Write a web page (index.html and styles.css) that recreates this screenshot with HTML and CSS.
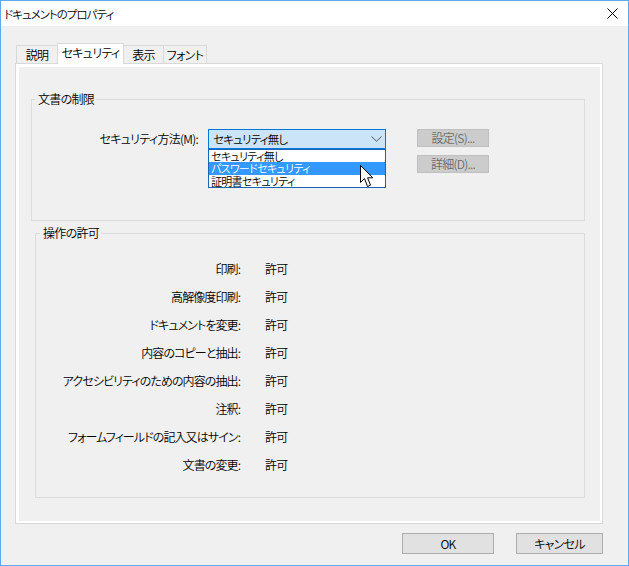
FILE: index.html
```html
<!DOCTYPE html>
<html lang="ja">
<head>
<meta charset="utf-8">
<title>ドキュメントのプロパティ</title>
<link rel="stylesheet" href="styles.css">
</head>
<body>
<div class="window">
  <div class="titlebar">
    <span class="title">ドキュメントのプロパティ</span>
    <svg class="close" width="11" height="11" viewBox="0 0 11 11"><path d="M0.5 0.5 L10.5 10.5 M10.5 0.5 L0.5 10.5" stroke="#000" stroke-width="1" fill="none"/></svg>
  </div>
  <div class="content">
    <div class="tabs">
      <div class="tab t1">説明</div>
      <div class="tab selected t2">セキュリティ</div>
      <div class="tab t3">表示</div>
      <div class="tab t4">フォント</div>
    </div>
    <div class="panel">
      <div class="page">
        <div class="group g1">
          <div class="group-title">文書の制限</div>
          <div class="method-row">
            <div class="method-label">セキュリティ方法(M):</div>
            <div class="combo-wrap">
              <div class="combo">
                <span class="combo-text">セキュリティ無し</span>
                <svg class="chevron" width="11" height="6" viewBox="0 0 11 6"><path d="M0.5 0.5 L5.5 5.2 L10.5 0.5" stroke="#555" stroke-width="1" fill="none"/></svg>
              </div>
              <ul class="dropdown">
                <li class="item">セキュリティ無し</li>
                <li class="item hl">パスワードセキュリティ</li>
                <li class="item">証明書セキュリティ</li>
              </ul>
              <svg class="cursor" width="14" height="23" viewBox="0 0 14 23"><path d="M0.5 0.5 V17.5 L4.5 13.5 L7.5 21.5 L10.5 20.2 L7.6 12.8 H12.8 Z" fill="#fff" stroke="#000" stroke-width="1" stroke-linejoin="miter"/></svg>
            </div>
            <div class="side-buttons">
              <div class="btn disabled">設定(S)...</div>
              <div class="btn disabled">詳細(D)...</div>
            </div>
          </div>
        </div>
        <div class="group g2">
          <div class="group-title">操作の許可</div>
          <div class="perms">
            <div class="perm-label">印刷:</div><div class="perm-value">許可</div>
            <div class="perm-label">高解像度印刷:</div><div class="perm-value">許可</div>
            <div class="perm-label">ドキュメントを変更:</div><div class="perm-value">許可</div>
            <div class="perm-label">内容のコピーと抽出:</div><div class="perm-value">許可</div>
            <div class="perm-label">アクセシビリティのための内容の抽出:</div><div class="perm-value">許可</div>
            <div class="perm-label">注釈:</div><div class="perm-value">許可</div>
            <div class="perm-label">フォームフィールドの記入又はサイン:</div><div class="perm-value">許可</div>
            <div class="perm-label">文書の変更:</div><div class="perm-value">許可</div>
          </div>
        </div>
      </div>
    </div>
    <div class="footer">
      <div class="btn dlg ok">OK</div>
      <div class="btn dlg cancel">キャンセル</div>
    </div>
  </div>
</div>
</body>
</html>
```
FILE: styles.css
```css
* { box-sizing: border-box; }
html, body { margin: 0; padding: 0; }
body {
  font-family: "Noto Sans CJK JP", "Noto Sans", sans-serif;
  font-size: 12px;
  font-weight: 350;
  font-feature-settings: "palt";
  letter-spacing: -0.7px;
  color: #000;
  background: #f0f0f0;
}
.window {
  width: 629px;
  height: 566px;
  border: 1px solid #5fa8ef;
  background: #f0f0f0;
  display: flex;
  flex-direction: column;
}
.titlebar {
  height: 25px;
  background: #fff;
  display: flex;
  align-items: center;
  padding-left: 3px;
}
.title {
  line-height: 16px;
  font-size: 11.5px;
  letter-spacing: -1px;
}
.close { margin-left: auto; margin-right: 10px; }

.content {
  padding: 0 25px 0 14px;
}
.tabs {
  display: flex;
  align-items: flex-end;
  height: 20px;
  margin-top: 17px;
  padding-left: 1px;
}
.tab {
  height: 18px;
  border: 1px solid #d9d9d9;
  border-bottom: none;
  background: #f0f0f0;
  display: flex;
  align-items: center;
  justify-content: center;
  line-height: 14px;
  margin-left: -1px;
}
.t1 { width: 42px; margin-left: 0; }
.t2 { width: 67px; }
.t3 { width: 41px; }
.t4 { width: 44px; }
.tab.selected {
  height: 21px;
  margin-bottom: -1px;
  background: #fff;
  position: relative;
  z-index: 1;
  align-items: flex-start;
  padding-top: 2px;
}
.panel {
  width: 588px;
  height: 461px;
  border: 1px solid #d9d9d9;
}
.page {
  height: 100%;
  border-style: solid;
  border-color: #fff;
  border-width: 3px 2px 2px 3px;
  background: #f0f0f0;
  padding-top: 1px;
}
.group {
  border: 1px solid #dcdcdc;
}
.g1 {
  width: 554px;
  height: 122px;
  margin: 31px 0 0 12px;
}
.g2 {
  width: 550px;
  height: 265px;
  margin: 12px 0 0 16px;
}
.group-title {
  width: fit-content;
  background: #f0f0f0;
  line-height: 14px;
  margin-top: -8px;
  padding: 0 2px 0 3px;
}
.g1 .group-title { margin-left: 3px; }
.g2 .group-title { margin-left: 4px; }

.method-row {
  display: flex;
  align-items: flex-start;
  margin-top: 23px;
}
.method-label {
  width: 166px;
  margin-right: 10px;
  text-align: right;
  line-height: 19px;
}
.combo-wrap {
  position: relative;
  width: 178px;
}
.combo {
  height: 20px;
  border: 1px solid #0078d7;
  background: #cce4f7;
  display: flex;
  align-items: center;
  padding: 0 3px 0 4px;
}
.combo-text {
  line-height: 16px;
  font-size: 11.5px;
  letter-spacing: -0.8px;
}
.chevron { margin-left: auto; }
.dropdown {
  position: absolute;
  top: 100%;
  left: 0;
  width: 178px;
  margin: 0;
  padding: 0;
  list-style: none;
  background: #fff;
  border: 1px solid #1565b8;
  z-index: 2;
  font-size: 11px;
  letter-spacing: -0.7px;
}
.item {
  height: 12px;
  line-height: 12px;
  padding-left: 2px;
  white-space: nowrap;
}
.item.hl {
  height: 13px;
  line-height: 13px;
  background: #3399ff;
  color: #fff;
}
.cursor {
  position: absolute;
  left: 152px;
  top: 36px;
  z-index: 3;
}
.side-buttons {
  display: flex;
  flex-direction: column;
  gap: 8px;
  margin-left: 31px;
}
.btn {
  display: flex;
  align-items: center;
  justify-content: center;
  line-height: 14px;
}
.btn.disabled {
  width: 72px;
  height: 18px;
  background: #cccccc;
  border: 1px solid #bfbfbf;
  color: #6d6d6d;
}
.perms {
  display: grid;
  grid-template-columns: 204px auto;
  column-gap: 25px;
  grid-auto-rows: 28px;
  margin-top: 15px;
  line-height: 28px;
}
.perm-label { text-align: right; white-space: nowrap; letter-spacing: -0.9px; }
.perm-value { white-space: nowrap; }

.footer {
  display: flex;
  justify-content: flex-end;
  gap: 22px;
  margin-top: 9px;
}
.btn.dlg {
  height: 21px;
  background: #e1e1e1;
  border: 1px solid #adadad;
}
.ok { width: 92px; }
.cancel { width: 87px; }
```
